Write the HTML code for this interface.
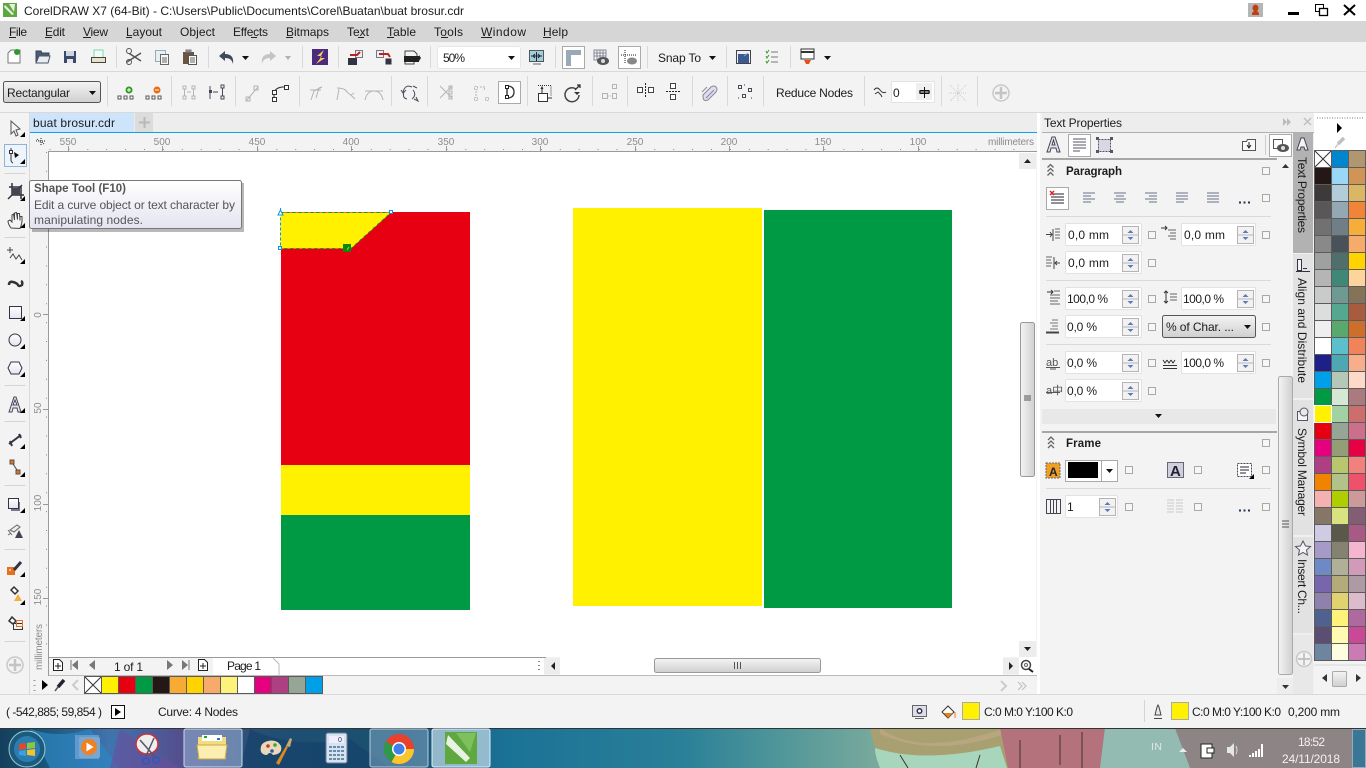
<!DOCTYPE html>
<html><head><meta charset="utf-8"><title>CorelDRAW X7</title>
<style>
html,body{margin:0;padding:0;background:#f3f3f3;width:1366px;height:768px;overflow:hidden}
svg{display:block;position:absolute;left:0;top:0}
text{font-family:"Liberation Sans",sans-serif;font-size:12px;fill:#1c1c1c}
.b{font-weight:bold;font-size:11.500px}
.r{font-size:10px;fill:#8c8c8c}
.d{stroke:#4a4a5a;fill:none;stroke-width:1}
.g{stroke:#b4b4b4;fill:none;stroke-width:1}
.k{stroke:#2b2b3a;fill:none;stroke-width:1}
.w{fill:#f4f4f4}
</style></head><body>
<svg width="1366" height="768" viewBox="0 0 1366 768" xmlns="http://www.w3.org/2000/svg">
<defs>
<linearGradient id="gb" x1="0" y1="0" x2="0" y2="1"><stop offset="0" stop-color="#f4f4f4"/><stop offset="1" stop-color="#cfcfcf"/></linearGradient>
<linearGradient id="gt" x1="0" y1="0" x2="0" y2="1"><stop offset="0" stop-color="#fff"/><stop offset="1" stop-color="#e3e4ef"/></linearGradient>
<linearGradient id="gv" x1="0" y1="0" x2="1" y2="0"><stop offset="0" stop-color="#f4f4f4"/><stop offset="1" stop-color="#cfcfcf"/></linearGradient>
<linearGradient id="tb" x1="0" y1="0" x2="1" y2="0"><stop offset="0" stop-color="#153f5c"/><stop offset=".03" stop-color="#185478"/><stop offset=".08" stop-color="#3f74ad"/><stop offset=".13" stop-color="#54508f"/><stop offset=".2" stop-color="#1f4f72"/><stop offset=".3" stop-color="#1a5070"/><stop offset=".37" stop-color="#1a7296"/><stop offset=".5" stop-color="#2a8098"/><stop offset=".56" stop-color="#4a9399"/><stop offset=".64" stop-color="#78a99c"/></linearGradient>
<g id="cb"><rect x=".5" y=".5" width="7" height="7" fill="#f6f6f6" stroke="#a8a8a8"/></g>
<g id="sp"><rect x=".5" y=".5" width="16" height="17" fill="#f2f2f2" stroke="#b4b4b4"/><path d="M1 9h15" stroke="#b4b4b4"/><path d="M8.500 4l3 3h-6z M8.500 14l3-3h-6z" fill="#5f78b8"/></g>
<g id="fd"><rect x=".5" y=".5" width="76" height="22" rx="1" fill="#fff" stroke="#e2e2e2"/><use href="#sp" x="57" y="3"/></g>
<g id="fd2"><rect x=".5" y=".5" width="74" height="22" rx="1" fill="#fff" stroke="#e2e2e2"/><use href="#sp" x="56" y="3"/></g>
<path id="cn" d="M0 0h5v-5z" fill="#000"/>
<path id="dd" d="M0 0h7l-3.500 4z" fill="#111"/>
<g id="nodes3"><rect x="0" y="0" width="3" height="3" fill="#fff" stroke="#555"/><rect x="6" y="0" width="3" height="3" fill="#fff" stroke="#555"/><rect x="12" y="0" width="3" height="3" fill="#fff" stroke="#555"/></g>
</defs>

<!-- base -->
<rect width="1366" height="768" fill="#f3f3f3"/>
<rect width="1366" height="21" fill="#fff"/>
<rect y="21" width="1366" height="21" fill="#d6d6d6"/>
<rect y="71" width="1366" height="1" fill="#d9d9d9"/>
<rect y="112" width="1366" height="1" fill="#d9d9d9"/>

<!-- title -->
<rect x="3" y="3" width="14" height="14" fill="#5fa83f"/>
<path d="M5 5l9 9-2 1-8-8z M9 4l5 8 1-8z" fill="#fff" opacity=".85"/>
<text x="24" y="15" textLength="440">CorelDRAW X7 (64-Bit) - C:\Users\Public\Documents\Corel\Buatan\buat brosur.cdr</text>
<rect x="1248" y="3" width="15" height="14" fill="#b5b5b5"/>
<path d="M1252 15v-2l2-2a3 3.500 0 1 1 3 0l2 2v2z" fill="#c23f12"/>
<rect x="1288" y="12" width="11" height="3" fill="#000"/>
<rect x="1315.500" y="4.500" width="8" height="7" fill="#fff" stroke="#000"/><rect x="1319.500" y="8.500" width="8" height="7" fill="#fff" stroke="#000" stroke-width="1.300"/>
<path d="M1344 5l11 10M1355 5l-11 10" stroke="#000" stroke-width="2"/>

<!-- menu -->
<g>
<text x="9" y="36" textLength="18">File</text><rect x="9" y="37" width="7" height="1" fill="#222"/>
<text x="45" y="36" textLength="20">Edit</text><rect x="45" y="37" width="7" height="1" fill="#222"/>
<text x="83" y="36" textLength="25">View</text><rect x="83" y="37" width="8" height="1" fill="#222"/>
<text x="126" y="36" textLength="36">Layout</text><rect x="126" y="37" width="6" height="1" fill="#222"/>
<text x="180" y="36" textLength="35">Object</text>
<text x="233" y="36" textLength="35">Effects</text><rect x="251" y="37" width="6" height="1" fill="#222"/>
<text x="286" y="36" textLength="43">Bitmaps</text><rect x="286" y="37" width="7" height="1" fill="#222"/>
<text x="347" y="36" textLength="22">Text</text><rect x="358" y="37" width="6" height="1" fill="#222"/>
<text x="387" y="36" textLength="29">Table</text><rect x="387" y="37" width="7" height="1" fill="#222"/>
<text x="434" y="36" textLength="29">Tools</text><rect x="441" y="37" width="7" height="1" fill="#222"/>
<text x="481" y="36" textLength="45">Window</text><rect x="481" y="37" width="11" height="1" fill="#222"/>
<text x="543" y="36" textLength="25">Help</text><rect x="543" y="37" width="8" height="1" fill="#222"/>
</g>

<!-- toolbar 1 separators -->
<path d="M116.500 46v22M208.500 46v22M302.500 46v22M338.500 46v22M430.500 46v22M555.500 46v22M647.500 46v22M726.500 46v22M790.500 46v22" stroke="#d9d9d9"/>
<!-- toolbar 1 icons -->
<path d="M8 53l3-3h9v13H8z" fill="#fff" stroke="#777"/><circle cx="17" cy="52" r="3" fill="#2e9a2e"/>
<path d="M36 62V51h5l1 2h7v3" fill="#4e5a70" stroke="#3a4558"/><path d="M36 63l3-7h11l-2 7z" fill="#e9edf2" stroke="#4a566a"/>
<rect x="64" y="51" width="12" height="12" fill="#3a4a6a"/><rect x="66" y="51" width="8" height="5" fill="#cfd4de"/><rect x="67" y="59" width="6" height="4" fill="#e8e8e8"/>
<path d="M94 57v-7h9v7" fill="#f2fbf8" stroke="#7da"/><rect x="91.500" y="57.500" width="14" height="5" fill="#e9e2c5" stroke="#444"/>
<path d="M127 52l14 9M127 62l14-9" stroke="#555" stroke-width="1.500"/><circle cx="129" cy="51" r="2.500" class="w" stroke="#555" fill="none"/><circle cx="129" cy="62" r="2.500" fill="none" stroke="#555"/>
<rect x="155.500" y="50.500" width="10" height="11" fill="#e6f0f0" stroke="#9ab"/><rect x="160.500" y="54.500" width="8" height="10" fill="#f8f8f8" stroke="#666"/><path d="M162 58h5M162 60h5M162 62h5" stroke="#666"/>
<rect x="183" y="52" width="11" height="12" fill="#6b5540"/><path d="M186 52v-2h5v2z" fill="#99a" stroke="#778"/><rect x="188.500" y="55.500" width="8" height="9" fill="#fafafa" stroke="#555"/><path d="M190 58h5M190 60h5M190 62h5" stroke="#666"/>
<path d="M219 56l6-5v3c6 0 9 3 8 10-1-4-3-6-8-6v3z" fill="#3f4a5e"/>
<use href="#dd" x="242" y="56"/>
<path d="M276 56l-6-5v3c-6 0-9 3-8 10 1-4 3-6 8-6v3z" fill="#c4c4c4"/>
<path d="M285 56h6l-3 4z" fill="#b0b0b0"/>
<rect x="312" y="49" width="16" height="16" fill="#4c2a7e"/><path d="M324 50l-7 6h5l-6 8 9-6h-5l4-8z" fill="#f2d25e"/>
<rect x="348.500" y="58.500" width="8" height="6" fill="#334" stroke="#334"/><rect x="355.500" y="50.500" width="7" height="7" fill="#eee" stroke="#778"/><path d="M350 55h7l3-3" stroke="#b22" stroke-width="2" fill="none"/>
<rect x="376.500" y="50.500" width="7" height="7" fill="#eee" stroke="#778"/><rect x="385.500" y="58.500" width="6" height="6" fill="#334"/><path d="M379 54h9l2 3" stroke="#b22" stroke-width="2" fill="none"/>
<path d="M405 51h9l3 3v4h-12z" fill="#f4f4f4" stroke="#444"/><rect x="404" y="56" width="15" height="6" fill="#222"/><path d="M405 62v2h9v-2" stroke="#444" fill="none"/><path d="M419 55l2 3-2 3z" fill="#222"/>
<rect x="437.500" y="46.500" width="83" height="22" rx="2" fill="#fff" stroke="#e6e6e6"/>
<text x="443" y="62" textLength="22">50%</text><use href="#dd" x="508" y="56"/>
<rect x="529.500" y="50.500" width="14" height="11" fill="#9ecfdc" stroke="#555"/><path d="M531 56h11M536.500 52v9M533 56l2-2M533 56l2 2M540 56l-2-2M540 56l-2 2" stroke="#223"/><path d="M533 64h8" stroke="#666"/>
<rect x="562.500" y="46.500" width="22" height="22" fill="#fff" stroke="#aaa"/><path d="M566 50h15v5h-10v11h-5z" fill="#9aa9b8"/>
<path d="M594 50h12v10h-12zM597 50v10M600 50v10M603 50v10M594 53h12M594 56h12" stroke="#889" fill="none"/><ellipse cx="603" cy="61" rx="6" ry="4" fill="#555"/><circle cx="603" cy="61" r="2" fill="#ddd"/>
<rect x="618.500" y="46.500" width="22" height="22" fill="#fff" stroke="#aaa"/><path d="M625 50v13M621 55h15" stroke="#222" stroke-dasharray="1 1"/><ellipse cx="632" cy="61" rx="5" ry="3.500" fill="#888"/>
<text x="658" y="62" textLength="43">Snap To</text><use href="#dd" x="709" y="56"/>
<rect x="736.500" y="50.500" width="14" height="13" fill="#eef" stroke="#444"/><rect x="738" y="54" width="11" height="9" fill="#3a5a90"/><path d="M744 56l4-3" stroke="#8a9"/>
<path d="M766 51l1 2 2-3M766 56l1 2 2-3M766 61l1 2 2-3" stroke="#3a9a2a" fill="none"/><path d="M771 52h7M771 57h7M771 62h7" stroke="#777"/>
<rect x="801" y="49" width="13" height="10" fill="#fff" stroke="#333"/><rect x="801" y="51" width="13" height="2" fill="#333"/><path d="M804 60h7l-2 4h-3z" fill="#e8501a"/>
<use href="#dd" x="824" y="56"/>

<!-- toolbar 2 -->
<path d="M107.500 76v30M171.500 76v30M235.500 76v30M299.500 76v30M391.500 76v30M427.500 76v30M527.500 76v30M592.500 76v30M627.500 76v30M692.500 76v30M727.500 76v30M763.500 76v30M864.500 76v30M941.500 76v30M977.500 76v30" stroke="#d9d9d9"/>
<rect x="3.500" y="81.500" width="97" height="21" rx="2" fill="url(#gb)" stroke="#555"/>
<text x="7" y="97" textLength="63">Rectangular</text><use href="#dd" x="89" y="91"/>
<use href="#nodes3" x="118" y="96"/><circle cx="129" cy="90" r="3.500" fill="#2e9a1e"/><path d="M127 90h4M129 88v4" stroke="#fff"/>
<use href="#nodes3" x="146" y="96"/><circle cx="157" cy="90" r="3.500" fill="#ee6a10"/><path d="M155 90h4" stroke="#fff"/>
<g class="g"><path d="M183 86h3v3h-3zM183 96h3v3h-3zM192 86h3v3h-3zM192 96h3v3h-3zM184.500 89v7M193.500 89v7M187 92h4"/></g>
<g class="d"><path d="M210 86v13M221 85h3v3h-3zM221 96h3v3h-3zM222.500 88v8M213 92h5"/></g><rect x="209" y="90" width="3" height="3" fill="#445"/>
<path d="M246 101l12-14M246 97h4v4h-4zM254 86h4v4h-4z" class="g"/>
<path d="M274 97v-4q1-5 8-6h6" class="k"/><path d="M272.500 97.500h4v4h-4zM284.500 85.500h4v4h-4zM272.500 90.500h4v4h-4z" fill="#fff" stroke="#333"/>
<path d="M311 100l3-9 8-4M316 98l3-10 3-1M310 90h11" class="g"/>
<path d="M337 88q8 0 10 4 4 3 8 7M337 100l2-11M351 95l3-2" class="g"/>
<path d="M365 100q2-9 9-9t9 9M365 91h18" class="g"/>
<path d="M404 92q-2 6 3 7M412 87q-7-3-9 5M413 90q4 5-1 9M413 86l4 2" class="d"/>
<path d="M401 90l2 3 3-3M414 99l4 2-2-4" class="d"/>
<path d="M440 86l6 6-6 6M452 86l-6 6 6 6" class="g"/><path d="M449 86h3v3h-3zM449 91h3v3h-3zM449 96h3v3h-3z" class="g"/>
<path d="M474.500 86.500h3v3h-3zM474.500 97.500h3v3h-3zM485.500 97.500h3v3h-3zM476 91v5M480 87h5l-1 3" class="g" stroke-dasharray="2 1"/>
<rect x="498.500" y="81.500" width="22" height="22" fill="#fff" stroke="#aaa"/>
<path d="M507 86q7 0 7 6t-7 6z" fill="none" stroke="#333" stroke-width="1.300"/><path d="M505.500 85.500h3v3h-3zM505.500 95.500h3v3h-3z" fill="#fff" stroke="#222"/><path d="M507 88v8" stroke="#222"/>
<path d="M538 85.500h13v11" fill="none" stroke="#333" stroke-dasharray="1 1"/><rect x="538.500" y="93.500" width="9" height="8" fill="#fff" stroke="#333"/><path d="M541 89l1-2 1 2M542 87v6M548 98h4" stroke="#333"/>
<path d="M576 89a7 7 0 1 0 3 6" fill="none" stroke="#444" stroke-width="1.500"/><path d="M574 92l3 3 3-3" fill="#333"/><path d="M575 90l5-5M577 85h3v3" stroke="#333" fill="none" stroke-width="1.300"/>
<path d="M602.500 93.500h5v5h-5zM612.500 84.500h4v4h-4zM612.500 93.500h4v5h-4z" class="g"/><path d="M608 96h4" class="g" stroke-dasharray="1 1"/>
<rect x="637.500" y="87.500" width="5" height="5" fill="#fff" stroke="#444"/><rect x="648.500" y="87.500" width="5" height="5" fill="#fff" stroke="#444"/><path d="M645.500 83v15" stroke="#222" stroke-dasharray="2 1"/>
<rect x="670.500" y="83.500" width="5" height="5" fill="#fff" stroke="#444"/><rect x="670.500" y="94.500" width="5" height="5" fill="#fff" stroke="#444"/><path d="M666 91.500h15" stroke="#222" stroke-dasharray="2 1"/>
<path d="M703 95l8-8q3-2 5 0t0 5l-8 8q-3 1-4 0t-1-5zM706 98l8-8M707 87l-5 5" fill="#dde" stroke="#889"/>
<path d="M738.500 85.500h3v3h-3zM748.500 88.500h3v3h-3zM742.500 94.500h3v3h-3z" class="d"/><path d="M738 98h1M751 98h1M744 85h1" stroke="#333"/>
<text x="776" y="97" textLength="77">Reduce Nodes</text>
<path d="M874 90q3-4 6 0t6 2M875 94l3-2 3 3 1 2" fill="none" stroke="#333"/>
<rect x="891.500" y="81.500" width="43" height="21" rx="1" fill="#fff" stroke="#e2e2e2"/>
<text x="893" y="97">0</text>
<rect x="916" y="83" width="16" height="17" fill="#efefef"/><path d="M919 92h11M924.500 87v11" stroke="#111"/><rect x="920" y="90.500" width="9" height="3" fill="none" stroke="#111"/>
<path d="M950 85l16 16M966 85l-16 16M958 84v18M949 93h18" stroke="#ccc" stroke-dasharray="1 1"/>
<circle cx="1001" cy="93" r="8" fill="#f3f3f3" stroke="#c8c8c8" stroke-width="1.500"/><path d="M995 93h12M1001 87v12" stroke="#c4c4c4" stroke-width="2.500"/>

<!-- Left toolbox -->
<rect x="29" y="113" width="1" height="582" fill="#d9d9d9"/>
<path d="M4.500 173.500h21M4.500 237.500h21M4.500 385.500h21M4.500 421.500h21M4.500 485.500h21M4.500 549.500h21M4.500 641.500h21" stroke="#d4d4d4"/>
<path d="M11 121l9 8-4 1 2 5-2 1-2-5-3 3z" fill="#f4f4f4" stroke="#555"/><use href="#cn" x="20" y="137"/>
<rect x="4.500" y="144.500" width="22" height="22" fill="#eef4fb" stroke="#8fb2d6"/>
<path d="M11 148v12q0 2 2 3" fill="none" stroke="#333"/><rect x="9.500" y="150.500" width="3" height="3" fill="#fff" stroke="#333"/><path d="M14 152l5 3-4 3z" fill="#111"/><use href="#cn" x="20" y="164"/>
<path d="M12 183v12h12M9 187h12v12M8 199l14-14" stroke="#333" fill="none" stroke-width="1.500"/><rect x="12" y="188" width="8" height="7" fill="#445"/><use href="#cn" x="20" y="201"/>
<path d="M11 228q-3-4-3-7l2-1 2 2v-7l1.500-1 1 6v-7l2-.5 1 7v-6l2 0 .5 7 v-4h2q.5 7-2 12z" fill="#f4f4f4" stroke="#444"/><use href="#cn" x="20" y="228"/>
<path d="M7 250l6 0M10 247v6M10 258l3-4 3 5 3-4 3 5" stroke="#444" fill="none"/><use href="#cn" x="20" y="264"/>
<path d="M9 285q0-4 4-3t5 3 4 0q1-3-1-4" stroke="#333" stroke-width="2.500" fill="none"/>
<rect x="9.500" y="306.500" width="12" height="12" fill="url(#gt)" stroke="#334"/><use href="#cn" x="20" y="321"/>
<ellipse cx="15" cy="340" rx="6" ry="6" fill="url(#gt)" stroke="#334"/><use href="#cn" x="20" y="349"/>
<path d="M11 362h8l3 6-3 6h-8l-3-6z" fill="url(#gt)" stroke="#334"/><use href="#cn" x="20" y="377"/>
<path d="M9 412l5-15h2l5 15h-3l-1-4h-4l-1 4zM13 405h4l-2-5z" fill="#e6e6f0" stroke="#445"/><use href="#cn" x="20" y="413"/>
<path d="M9 444l12-9M10 441l2 5M19 434l2 4" stroke="#334" stroke-width="2" fill="none"/><use href="#cn" x="20" y="449"/>
<rect x="10" y="460" width="4" height="4" fill="#e8701a" stroke="#555"/><rect x="16" y="470" width="4" height="4" fill="#e8701a" stroke="#555"/><path d="M13 464l4 6" stroke="#444"/><use href="#cn" x="20" y="477"/>
<rect x="11" y="502" width="9" height="9" fill="#778" /><rect x="8.500" y="498.500" width="10" height="10" fill="url(#gt)" stroke="#334"/><use href="#cn" x="20" y="513"/>
<path d="M10 530l7-5 3 2-6 5zM8 530l4 5M11 533l-3 2" stroke="#666" fill="#eee"/><path d="M19 530l4 8h-8z" fill="#445"/>
<rect x="7" y="567" width="8" height="8" fill="#e8701a"/><rect x="9" y="569" width="2" height="2" fill="#fbb"/><path d="M14 570l7-8" stroke="#334" stroke-width="3"/><use href="#cn" x="20" y="577"/>
<path d="M11 590l3-3 4 4-3 3z" fill="#fff" stroke="#333" stroke-width="1.500"/><path d="M18 594l4 7h-8z" fill="#f0b040"/><use href="#cn" x="20" y="605"/>
<path d="M9 621l3-4 4 4-3 3z" fill="#fff" stroke="#333" stroke-width="1.500"/><rect x="13.500" y="623.500" width="9" height="6" fill="none" stroke="#334"/><rect x="16.500" y="620.500" width="6" height="6" fill="none" stroke="#e8701a"/>
<circle cx="15" cy="665" r="8" fill="#f3f3f3" stroke="#c8c8c8" stroke-width="1.500"/><path d="M9 665h12M15 659v12" stroke="#c4c4c4" stroke-width="2.500"/>

<!-- document tab bar -->
<rect x="30" y="113" width="1007" height="20" fill="#ededed"/>
<rect x="30" y="113" width="104" height="19" fill="#cde4fb"/>
<rect x="135" y="113" width="18" height="19" fill="#dcdcdc"/><path d="M139 122.500h11M144.500 117v11" stroke="#b8b8b8" stroke-width="2"/>
<rect x="30" y="132" width="1007" height="1" fill="#0aa3ea"/>
<text x="33" y="127" textLength="82">buat brosur.cdr</text>

<!-- rulers -->
<rect x="30" y="133" width="1007" height="18" fill="#f3f3f3"/>
<rect x="30" y="133" width="18" height="524" fill="#f3f3f3"/>
<rect x="49" y="152" width="970" height="505" fill="#fff"/>
<rect x="48" y="151" width="989" height="1" fill="#9a9a9a"/>
<rect x="48" y="151" width="1" height="525" fill="#9a9a9a"/>
<path d="M36 141h9M41 138v8M37 139l3 3M44 144l-2-2" stroke="#222" stroke-dasharray="1 1"/>
<g text-anchor="middle">
<text class="r" x="68" y="145">550</text><text class="r" x="162" y="145">500</text><text class="r" x="257" y="145">450</text><text class="r" x="351" y="145">400</text><text class="r" x="446" y="145">350</text><text class="r" x="540" y="145">300</text><text class="r" x="635" y="145">250</text><text class="r" x="729" y="145">200</text><text class="r" x="823" y="145">150</text><text class="r" x="918" y="145">100</text>
</g>
<text class="r" x="988" y="145" textLength="46">millimeters</text>
<path d="M68.500 146v5M162.500 146v5M257.500 146v5M351.500 146v5M446.500 146v5M540.500 146v5M635.500 146v5M729.500 146v5M823.500 146v5M918.500 146v5" stroke="#999"/>
<path d="M49 149.500h970" stroke="#888" stroke-dasharray="1 17.900" stroke-dashoffset="-0.500"/>
<path d="M46.500 152v505" stroke="#888" stroke-dasharray="1 17.900"/>
<path d="M43 314.500h5M43 409.500h5M43 504.500h5M43 598.500h5" stroke="#999"/>
<text class="r" transform="translate(41,318) rotate(-90)" text-anchor="middle" x="3" y="0">0</text>
<text class="r" transform="translate(41,408) rotate(-90)" text-anchor="middle">50</text>
<text class="r" transform="translate(41,503) rotate(-90)" text-anchor="middle">100</text>
<text class="r" transform="translate(41,597) rotate(-90)" text-anchor="middle">150</text>
<text class="r" transform="translate(42,670) rotate(-90)" textLength="46">millimeters</text>

<!-- objects -->
<rect x="281" y="212" width="189" height="253" fill="#e60012"/>
<rect x="281" y="465" width="189" height="50" fill="#fff100"/>
<rect x="281" y="515" width="189" height="95" fill="#009944"/>
<rect x="573" y="208" width="189" height="398" fill="#fff100"/>
<rect x="764" y="210" width="188" height="398" fill="#009944"/>
<path d="M280.500 212.500H391L351 248.500H280.500z" fill="#fff100"/>
<path d="M280.500 212.500H391L351 248.500H280.500" fill="none" stroke="#009944" stroke-dasharray="3 3"/>
<path d="M280.500 212.500V248.500" fill="none" stroke="#0a94e0" stroke-dasharray="3 2"/>
<rect x="343" y="244" width="8" height="8" fill="#0a8a0a"/>
<path d="M347 250l2-3" stroke="#9c6"/>
<rect x="389.500" y="210.500" width="3" height="3" fill="#fff" stroke="#0a94e0"/>
<rect x="278.500" y="246.500" width="3" height="3" fill="#fff" stroke="#0a94e0"/>
<path d="M278 215l2.500-5 2.500 5h-5z M280.500 208v3" fill="#fff" stroke="#0a94e0"/>

<!-- tooltip -->
<rect x="32" y="183" width="212" height="49" fill="#000" opacity=".28"/>
<rect x="29.500" y="180.500" width="212" height="48" rx="2" fill="url(#gt)" stroke="#777"/>
<text x="34" y="192" class="b" style="fill:#555" textLength="92">Shape Tool (F10)</text>
<text x="34" y="209" style="fill:#555" textLength="201">Edit a curve object or text character by</text>
<text x="34" y="224" style="fill:#555" textLength="109">manipulating nodes.</text>

<!-- canvas scrollbars -->
<rect x="1019" y="152" width="17" height="505" fill="#fff"/>
<rect x="1019" y="153" width="17" height="16" fill="#ededed"/><path d="M1024 163h7l-3.500-4z" fill="#222"/>
<rect x="1020.500" y="322.500" width="14" height="154" rx="2" fill="url(#gv)" stroke="#999"/><path d="M1024 396h7M1024 398h7M1024 400h7" stroke="#555"/>
<rect x="1019" y="641" width="17" height="16" fill="#ededed"/><path d="M1024 647h7l-3.500 4z" fill="#222"/>
<rect x="49" y="658" width="164" height="17" fill="#f3f3f3"/>
<rect x="213" y="658" width="331" height="17" fill="#fff"/>
<rect x="560" y="657" width="443" height="18" fill="#fff"/>
<rect x="1019" y="657" width="18" height="18" fill="#fff"/>
<rect x="49" y="657" width="497" height="1" fill="#9a9a9a"/>
<rect x="49" y="675" width="988" height="1" fill="#bbb"/>
<path d="M53.500 659.500h6l3 3v8h-9z" fill="#fff" stroke="#222"/><path d="M55 666h6M58 663v6" stroke="#222"/>
<path d="M71 660v10" stroke="#777"/><path d="M78 660v10l-6-5z M95 660v10l-6-5z" fill="#777"/>
<text x="114" y="671" textLength="29">1 of 1</text>
<path d="M167 660v10l6-5z M182 660v10l6-5z" fill="#777"/><path d="M189 660v10" stroke="#777"/>
<path d="M198.500 659.500h6l3 3v8h-9z" fill="#fff" stroke="#222"/><path d="M200 666h6M203 663v6" stroke="#222"/>
<path d="M273 658l6 6v11" stroke="#bbb" fill="none"/>
<text x="227" y="670" textLength="34">Page 1</text>
<path d="M539 661v1M539 665v1M539 669v1" stroke="#888" stroke-width="2"/>
<rect x="544" y="658" width="16" height="16" fill="#ededed"/><path d="M555 662v8l-4-4z" fill="#222"/>
<rect x="654.500" y="658.500" width="166" height="14" rx="2" fill="url(#gb)" stroke="#999"/><path d="M734.500 662v7M737.500 662v7M740.500 662v7" stroke="#555"/>
<rect x="1003" y="658" width="16" height="16" fill="#ededed"/><path d="M1009 662v8l4-4z" fill="#222"/>
<circle cx="1026" cy="665" r="4.500" fill="#fff" stroke="#444" stroke-width="1.500"/><circle cx="1026" cy="665" r="1.500" fill="none" stroke="#666"/><path d="M1029 669l4 3" stroke="#222" stroke-width="2"/>

<!-- bottom color bar -->
<path d="M34.500 680v1M34.500 685v1M34.500 690v1" stroke="#999" stroke-width="2"/>
<path d="M42 680v10l6-5z" fill="#000"/>
<path d="M55 691l3-4" stroke="#556" stroke-width="1.500"/><path d="M58 687l6-7" stroke="#223" stroke-width="3.500"/>
<path d="M78 680l-5 5 5 5" fill="none" stroke="#ccc" stroke-width="2"/>
<rect x="84" y="676" width="239" height="18" fill="#5a5a5a"/>
<rect x="85" y="677" width="16" height="16" fill="#fff"/><path d="M85 677l16 16M101 677l-16 16" stroke="#333"/>
<rect x="102" y="677" width="16" height="16" fill="#fff100"/><rect x="119" y="677" width="16" height="16" fill="#e60012"/><rect x="136" y="677" width="16" height="16" fill="#009944"/><rect x="153" y="677" width="16" height="16" fill="#231815"/><rect x="170" y="677" width="16" height="16" fill="#f7ab35"/><rect x="187" y="677" width="16" height="16" fill="#ffd200"/><rect x="204" y="677" width="16" height="16" fill="#f6ab6a"/><rect x="221" y="677" width="16" height="16" fill="#fff27a"/><rect x="238" y="677" width="16" height="16" fill="#fff"/><rect x="255" y="677" width="16" height="16" fill="#e4007f"/><rect x="272" y="677" width="16" height="16" fill="#ae3f83"/><rect x="289" y="677" width="16" height="16" fill="#95a596"/><rect x="306" y="677" width="16" height="16" fill="#00a0e9"/>
<path d="M1001 681l5 5-5 5" fill="none" stroke="#ccc" stroke-width="2"/>
<path d="M1018 682l4 4-4 4M1022 682l4 4-4 4" fill="none" stroke="#bbb"/>

<!-- gap white strip -->
<rect x="1037" y="113" width="3" height="581" fill="#fff"/>

<!-- status -->
<rect y="694" width="1366" height="1" fill="#d9d9d9"/>
<text x="6" y="716" textLength="96">( -542,885; 59,854 )</text>
<rect x="111.500" y="705.500" width="13" height="13" fill="#fff" stroke="#111"/><path d="M115 708v8l6-4z" fill="#000"/>
<text x="158" y="716" textLength="80">Curve: 4 Nodes</text>
<rect x="912.500" y="705.500" width="14" height="11" fill="#dde" stroke="#666"/><circle cx="919.500" cy="711" r="3" fill="#334"/><circle cx="919.500" cy="711" r="1.500" fill="#fff"/><path d="M915 718.500h9" stroke="#666"/>
<path d="M942 712l6-6 6 6-6 6z" fill="#fff" stroke="#333"/><path d="M944 713h9l-5 5z" fill="#e8801a"/><path d="M955 712v6" stroke="#e8801a"/>
<rect x="962.500" y="702.500" width="17" height="17" fill="#fff100" stroke="#aaa"/>
<text x="984" y="716" textLength="89">C:0 M:0 Y:100 K:0</text>
<rect x="1144" y="700" width="1" height="22" fill="#d4d4d4"/>
<path d="M1155 715l2-8 1-2 1 2 2 8zM1154 718.500h8" fill="#e8e8e8" stroke="#444"/>
<rect x="1171.500" y="702.500" width="17" height="17" fill="#fff100" stroke="#aaa"/>
<text x="1192" y="716" textLength="89">C:0 M:0 Y:100 K:0</text>
<text x="1288" y="716" textLength="52">0,200 mm</text>

<!-- Right panel -->
<rect x="1042" y="113" width="272" height="20" fill="#ededed"/>
<text x="1044" y="127" textLength="78">Text Properties</text>
<path d="M1283 118v8l4-4zM1287 118v8l4-4z" fill="#bbb"/>
<path d="M1304 118l7 7M1311 118l-7 7" stroke="#c0c0c0" stroke-width="1.500"/>
<rect x="1042" y="132" width="272" height="1" fill="#b0b0b0"/>
<path d="M1047 152l5-15h3l5 15h-3l-1-4h-5l-1 4zM1052 145h3l-1.500-5z" fill="#e6e6f0" stroke="#445"/>
<rect x="1068.500" y="134.500" width="22" height="22" fill="#fff" stroke="#aaa"/>
<path d="M1073 139h13M1073 142h13M1073 145h13M1073 148h13M1073 151h7" stroke="#556"/>
<rect x="1098.500" y="139.500" width="12" height="12" fill="#d8d8e4" stroke="#556" stroke-dasharray="2 1"/><path d="M1096 137h3v3h-3zM1110 137h3v3h-3zM1096 150h3v3h-3zM1110 150h3v3h-3z" fill="#556"/>
<path d="M1242.500 141.500h4l1-2h8v11h-13z" fill="#fafafa" stroke="#555"/><path d="M1249 142v5M1247 145l2 3 2-3" stroke="#222" fill="none"/>
<path d="M1265.500 135v20" stroke="#ccc"/>
<rect x="1269.500" y="134.500" width="22" height="22" fill="#fff" stroke="#aaa"/><rect x="1273.500" y="139.500" width="9" height="9" fill="none" stroke="#555"/><ellipse cx="1283" cy="148" rx="6" ry="4" fill="#555"/><circle cx="1283" cy="148" r="2" fill="#ddd"/>
<rect x="1042" y="158" width="235" height="2" fill="#a6a6a6"/>

<path d="M1048 168l3-3 3 3M1048 172l3-3 3 3M1048 176l3-3 3 3" fill="none" stroke="#666" stroke-width="1.300" transform="translate(-.5,-.5)"/>
<text x="1066" y="175" class="b" textLength="56">Paragraph</text>
<use href="#cb" x="1262" y="167"/>
<rect x="1046.500" y="187.500" width="22" height="22" fill="#fff" stroke="#aaa"/>
<path d="M1051 194h13M1051 197h13M1051 200h13M1051 203h13" stroke="#223"/><path d="M1050 191l4 4M1054 191l-4 4" stroke="#e02020" stroke-width="1.400"/>
<g stroke="#6a7088"><path d="M1083 193h12M1083 196h8M1083 199h12M1083 202h8"/><path d="M1114 193h12M1116 196h8M1114 199h12M1116 202h8"/><path d="M1145 193h12M1149 196h8M1145 199h12M1149 202h8"/><path d="M1176 193h12M1176 196h12M1176 199h12M1176 202h8"/><path d="M1207 193h12M1207 196h12M1207 199h12M1207 202h12"/></g>
<path d="M1239 202.500h2M1243.500 202.500h2M1248 202.500h2" stroke="#223355" stroke-width="2"/>
<use href="#cb" x="1262" y="194"/>
<rect x="1046" y="216" width="225" height="1" fill="#d9d9d9"/>
<path d="M1046 234.500h6M1050 232l2 2.500-2 2.500M1053 229v12" stroke="#444" fill="none"/><path d="M1055 229h5M1055 232h5M1055 235h5M1055 238h5" stroke="#666"/>
<use href="#fd" x="1065" y="223"/><text x="1068" y="239" textLength="41">0,0 mm</text><use href="#cb" x="1148" y="231"/>
<path d="M1161 228h6M1165 226l2 2-2 2" stroke="#333" fill="none"/><path d="M1168 230h8M1170 233h6M1168 236h8M1170 239h6" stroke="#666"/>
<use href="#fd2" x="1181" y="223"/><text x="1184" y="239" textLength="41">0,0 mm</text><use href="#cb" x="1262" y="231"/>
<path d="M1046 257h6M1046 260h5M1046 263h6M1046 266h5" stroke="#666"/><path d="M1054 257v12M1054 263h6M1057 261l-2 2 2 2" stroke="#444" fill="none"/>
<use href="#fd" x="1065" y="251"/><text x="1068" y="267" textLength="41">0,0 mm</text><use href="#cb" x="1148" y="259"/>
<rect x="1046" y="280" width="225" height="1" fill="#d9d9d9"/>
<path d="M1047 292h6M1051 290l2 2-2 2" stroke="#333" fill="none"/><path d="M1054 291h6M1050 295h10M1050 298h10M1050 301h8M1050 304h10" stroke="#666"/>
<use href="#fd" x="1065" y="287"/><text x="1067" y="303" textLength="41">100,0 %</text><use href="#cb" x="1148" y="295"/>
<path d="M1164 293l2-2 2 2M1164 301l2 2 2-2M1166 291v12" stroke="#333" fill="none"/><path d="M1170 294h7M1170 297h7M1170 300h7" stroke="#666"/>
<use href="#fd2" x="1181" y="287"/><text x="1183" y="303" textLength="41">100,0 %</text><use href="#cb" x="1262" y="295"/>
<path d="M1052 320h6M1050 323h8M1052 326h6M1050 329h8" stroke="#777"/><path d="M1046 332.500h13" stroke="#444" stroke-width="2"/>
<use href="#fd" x="1065" y="315"/><text x="1067" y="331" textLength="30">0,0 %</text><use href="#cb" x="1148" y="323"/>
<rect x="1162.500" y="315.500" width="93" height="22" rx="2" fill="url(#gb)" stroke="#555"/>
<text x="1166" y="331" textLength="68">% of Char. ...</text><use href="#dd" x="1244" y="325"/>
<use href="#cb" x="1262" y="323"/>
<rect x="1046" y="344" width="225" height="1" fill="#d9d9d9"/>
<text x="1046" y="366" style="font-size:11px;fill:#555">ab</text><path d="M1046 367.500h14M1050 369h6" stroke="#555"/>
<use href="#fd" x="1065" y="351"/><text x="1067" y="367" textLength="30">0,0 %</text><use href="#cb" x="1148" y="359"/>
<path d="M1162 360l2 3 2-3M1166 360l2 3 2-3M1170 360l2 3 2-3M1162 365.500h14M1162 368.500h14" stroke="#333" fill="none" transform="translate(1,0)"/>
<use href="#fd2" x="1181" y="351"/><text x="1183" y="367" textLength="41">100,0 %</text><use href="#cb" x="1262" y="359"/>
<text x="1046" y="394" style="font-size:11px;fill:#555" font-family="'Noto Sans CJK SC'">a中</text><path d="M1046 392.500h14" stroke="#555"/>
<use href="#fd" x="1065" y="379"/><text x="1067" y="395" textLength="30">0,0 %</text><use href="#cb" x="1148" y="387"/>
<rect x="1042" y="409" width="234" height="15" fill="#e8e8e8"/><path d="M1155 414h7l-3.500 4z" fill="#111"/>
<rect x="1042" y="431" width="235" height="2" fill="#a6a6a6"/>
<path d="M1048 440l3-3 3 3M1048 444l3-3 3 3M1048 448l3-3 3 3" fill="none" stroke="#666" stroke-width="1.300"/>
<text x="1066" y="447" class="b" textLength="35">Frame</text>
<use href="#cb" x="1262" y="439"/>
<rect x="1046" y="463" width="14" height="15" fill="#f0a020" stroke="#667" stroke-dasharray="2 1"/><text x="1049" y="476" class="b" style="font-size:12px;fill:#223">A</text>
<rect x="1065.500" y="460.500" width="52" height="21" fill="#fff" stroke="#aaa"/><rect x="1068" y="462" width="30" height="16" fill="#000"/><path d="M1101.500 461v20" stroke="#aaa"/><use href="#dd" x="1106" y="469"/>
<use href="#cb" x="1125" y="466"/>
<rect x="1167.500" y="462.500" width="16" height="15" fill="#cfd0dc" stroke="#667"/><text x="1170" y="476" class="b" style="font-size:15px;fill:#223">A</text>
<use href="#cb" x="1194" y="466"/>
<rect x="1237.500" y="463.500" width="14" height="13" fill="#fff" stroke="#445" stroke-dasharray="2 1"/><path d="M1240 467h9M1240 470h9M1240 473h6" stroke="#223"/><path d="M1249 479h5v-5z" fill="#000"/>
<use href="#cb" x="1262" y="466"/>
<rect x="1046" y="488" width="225" height="1" fill="#d9d9d9"/>
<rect x="1046.500" y="499.500" width="14" height="14" fill="#f3f3f3" stroke="#445"/><path d="M1050.500 499v15M1053.500 499v15M1056.500 499v15" stroke="#445"/>
<rect x="1065.500" y="495.500" width="52" height="22" rx="1" fill="#fff" stroke="#e2e2e2"/><use href="#sp" x="1099" y="498"/>
<text x="1067" y="511">1</text>
<use href="#cb" x="1125" y="503"/>
<path d="M1167 500h7M1176 500h7M1167 503h7M1176 503h7M1167 506h7M1176 506h7M1167 509h7M1176 509h7M1167 512h7M1176 512h7" stroke="#c8c8c8"/>
<use href="#cb" x="1194" y="503"/>
<path d="M1239 510.500h2M1243.500 510.500h2M1248 510.500h2" stroke="#223355" stroke-width="2"/>
<use href="#cb" x="1262" y="503"/>

<!-- panel scrollbar -->
<path d="M1282 168h7l-3.500-4z" fill="#333"/>
<rect x="1278.500" y="376.500" width="14" height="298" rx="2" fill="url(#gv)" stroke="#aaa"/><path d="M1282 521h7M1282 524h7M1282 527h7" stroke="#555"/>
<rect x="1277" y="678" width="16" height="16" fill="#ededed"/><path d="M1282 685h7l-3.500 4z" fill="#333"/>

<!-- docker tabs -->
<rect x="1293" y="133" width="21" height="561" fill="#f0f0f0"/>
<rect x="1293" y="133" width="20" height="120" fill="#b2b2b2"/>
<rect x="1293" y="254" width="20" height="144" fill="#e2e2e2"/>
<rect x="1293" y="400" width="20" height="135" fill="#e2e2e2"/>
<rect x="1293" y="537" width="20" height="96" fill="#e2e2e2"/>
<path d="M1297 150l4-12h3l4 12h-3l-1-3h-3l-1 3z" fill="#f2f2f2" stroke="#445"/>
<rect x="1297.500" y="259.500" width="4" height="11" fill="#f5f5f5" stroke="#334"/><path d="M1296 271.500h14M1303 268.500h4" stroke="#334"/>
<rect x="1297.500" y="411.500" width="10" height="9" fill="#f5f5f5" stroke="#556"/><circle cx="1304" cy="412" r="4" fill="#e8e8e8" stroke="#556"/>
<path d="M1303 541l2.500 5 5 .5-4 3.500 1 5-4.500-2.500-4.500 2.500 1-5-4-3.500 5-.5z" fill="#f4f4f4" stroke="#556"/>
<text transform="translate(1298,157) rotate(90)" textLength="76">Text Properties</text>
<text transform="translate(1298,278) rotate(90)" textLength="105">Align and Distribute</text>
<text transform="translate(1298,428) rotate(90)" textLength="88">Symbol Manager</text>
<text transform="translate(1298,559) rotate(90)" textLength="55">Insert Ch...</text>
<rect x="1293" y="635" width="20" height="59" fill="#e8e8e8"/>
<circle cx="1304" cy="659" r="7.500" fill="#f3f3f3" stroke="#c8c8c8" stroke-width="1.500"/><path d="M1298 659h12M1304 653v12" stroke="#c4c4c4" stroke-width="2"/>

<!-- palette -->
<rect x="1314" y="113" width="52" height="38" fill="#fff"/>
<rect x="1314" y="660" width="52" height="34" fill="#f3f3f3"/>
<path d="M1317 118h47" stroke="#bbb" stroke-dasharray="1 1.500" stroke-width="2"/>
<path d="M1337 123v10l5-5z" fill="#000"/>
<path d="M1335 148l3-4" stroke="#ccc" stroke-width="1.500"/><path d="M1338 144l6-6" stroke="#c0c0c0" stroke-width="3.500"/>
<rect x="1314" y="150" width="52" height="511" fill="#5c5c5c"/>
<g id="pal">
<rect x="1315" y="151" width="16" height="16" fill="#fff"/><path d="M1315 151l16 16M1331 151l-16 16" stroke="#333"/>
<rect x="1315" y="168" width="16" height="16" fill="#231815"/><rect x="1315" y="185" width="16" height="16" fill="#3e3a39"/><rect x="1315" y="202" width="16" height="16" fill="#595757"/><rect x="1315" y="219" width="16" height="16" fill="#727171"/><rect x="1315" y="236" width="16" height="16" fill="#898989"/><rect x="1315" y="253" width="16" height="16" fill="#9fa0a0"/><rect x="1315" y="270" width="16" height="16" fill="#b5b5b6"/><rect x="1315" y="287" width="16" height="16" fill="#c9caca"/><rect x="1315" y="304" width="16" height="16" fill="#dcdddd"/><rect x="1315" y="321" width="16" height="16" fill="#efefef"/><rect x="1315" y="338" width="16" height="16" fill="#fff"/><rect x="1315" y="355" width="16" height="16" fill="#1d2088"/><rect x="1315" y="372" width="16" height="16" fill="#00a0e9"/><rect x="1315" y="389" width="16" height="16" fill="#009944"/><rect x="1314.500" y="405.500" width="17" height="17" fill="#fff100" stroke="#fff"/><rect x="1315" y="423" width="16" height="16" fill="#e60012"/><rect x="1315" y="440" width="16" height="16" fill="#e4007f"/><rect x="1315" y="457" width="16" height="16" fill="#ae3f83"/><rect x="1315" y="474" width="16" height="16" fill="#f08300"/><rect x="1315" y="491" width="16" height="16" fill="#f5b0b0"/><rect x="1315" y="508" width="16" height="16" fill="#867668"/><rect x="1315" y="525" width="16" height="16" fill="#cfcbe3"/><rect x="1315" y="542" width="16" height="16" fill="#a69ac9"/><rect x="1315" y="559" width="16" height="16" fill="#6e8ac4"/><rect x="1315" y="576" width="16" height="16" fill="#7766ac"/><rect x="1315" y="593" width="16" height="16" fill="#8e82ad"/><rect x="1315" y="610" width="16" height="16" fill="#4f628f"/><rect x="1315" y="627" width="16" height="16" fill="#5a4f72"/><rect x="1315" y="644" width="16" height="16" fill="#6e85a0"/>

<rect x="1332" y="151" width="16" height="16" fill="#0086d1"/><rect x="1332" y="168" width="16" height="16" fill="#9ad6f5"/><rect x="1332" y="185" width="16" height="16" fill="#b2ccd9"/><rect x="1332" y="202" width="16" height="16" fill="#93a8b2"/><rect x="1332" y="219" width="16" height="16" fill="#6f7e87"/><rect x="1332" y="236" width="16" height="16" fill="#4a5259"/><rect x="1332" y="253" width="16" height="16" fill="#4f6f6a"/><rect x="1332" y="270" width="16" height="16" fill="#3f8878"/><rect x="1332" y="287" width="16" height="16" fill="#6f9a94"/><rect x="1332" y="304" width="16" height="16" fill="#55a890"/><rect x="1332" y="321" width="16" height="16" fill="#59a86e"/><rect x="1332" y="338" width="16" height="16" fill="#5bbfcc"/><rect x="1332" y="355" width="16" height="16" fill="#4ea8b3"/><rect x="1332" y="372" width="16" height="16" fill="#b5c8b8"/><rect x="1332" y="389" width="16" height="16" fill="#d5e8d4"/><rect x="1332" y="406" width="16" height="16" fill="#a2d1a3"/><rect x="1332" y="423" width="16" height="16" fill="#95a596"/><rect x="1332" y="440" width="16" height="16" fill="#949e76"/><rect x="1332" y="457" width="16" height="16" fill="#b8c66e"/><rect x="1332" y="474" width="16" height="16" fill="#b2c28b"/><rect x="1332" y="491" width="16" height="16" fill="#afce00"/><rect x="1332" y="508" width="16" height="16" fill="#d8e27f"/><rect x="1332" y="525" width="16" height="16" fill="#5a5848"/><rect x="1332" y="542" width="16" height="16" fill="#838370"/><rect x="1332" y="559" width="16" height="16" fill="#b0b098"/><rect x="1332" y="576" width="16" height="16" fill="#b3ab7a"/><rect x="1332" y="593" width="16" height="16" fill="#e0d26e"/><rect x="1332" y="610" width="16" height="16" fill="#fff27a"/><rect x="1332" y="627" width="16" height="16" fill="#fff9b1"/><rect x="1332" y="644" width="16" height="16" fill="#fffde0"/>

<rect x="1349" y="151" width="16" height="16" fill="#b09770"/><rect x="1349" y="168" width="16" height="16" fill="#d19457"/><rect x="1349" y="185" width="16" height="16" fill="#dbb765"/><rect x="1349" y="202" width="16" height="16" fill="#f08539"/><rect x="1349" y="219" width="16" height="16" fill="#f7ad3a"/><rect x="1349" y="236" width="16" height="16" fill="#f6ab6a"/><rect x="1349" y="253" width="16" height="16" fill="#ffd200"/><rect x="1349" y="270" width="16" height="16" fill="#fdd49b"/><rect x="1349" y="287" width="16" height="16" fill="#847358"/><rect x="1349" y="304" width="16" height="16" fill="#a85c3f"/><rect x="1349" y="321" width="16" height="16" fill="#cb6f2b"/><rect x="1349" y="338" width="16" height="16" fill="#f08359"/><rect x="1349" y="355" width="16" height="16" fill="#f8ae8a"/><rect x="1349" y="372" width="16" height="16" fill="#fcd9c8"/><rect x="1349" y="389" width="16" height="16" fill="#aa7a7e"/><rect x="1349" y="406" width="16" height="16" fill="#cb6f6e"/><rect x="1349" y="423" width="16" height="16" fill="#cb6f8a"/><rect x="1349" y="440" width="16" height="16" fill="#e60044"/><rect x="1349" y="457" width="16" height="16" fill="#f2807c"/><rect x="1349" y="474" width="16" height="16" fill="#ee526b"/><rect x="1349" y="491" width="16" height="16" fill="#cd9a9c"/><rect x="1349" y="508" width="16" height="16" fill="#835d73"/><rect x="1349" y="525" width="16" height="16" fill="#a85a85"/><rect x="1349" y="542" width="16" height="16" fill="#f4b5cf"/><rect x="1349" y="559" width="16" height="16" fill="#d19ab8"/><rect x="1349" y="576" width="16" height="16" fill="#ad9aa5"/><rect x="1349" y="593" width="16" height="16" fill="#dcbccc"/><rect x="1349" y="610" width="16" height="16" fill="#ae6a9e"/><rect x="1349" y="627" width="16" height="16" fill="#c94898"/><rect x="1349" y="644" width="16" height="16" fill="#cb7ab4"/>
</g>
<path d="M1314 665h52" stroke="#d9d9d9"/>
<path d="M1327 674v8l-5-4z" fill="#333"/><rect x="1332.500" y="671.500" width="14" height="15" rx="1" fill="url(#gb)" stroke="#aaa"/><path d="M1356 674v8l5-4z" fill="#333"/>

<!-- taskbar -->
<rect x="0" y="728" width="1366" height="40" fill="url(#tb)"/>
<path d="M30 729q30 10 60 0l30 39H50z" fill="#2e86c2" opacity=".7"/>
<path d="M120 729l60 39h-70z" fill="#6a4f9e" opacity=".6"/>
<path d="M250 729q40 20 100 10l40 29H240z" fill="#123f68" opacity=".6"/>
<path d="M870 728h140v40H880z" fill="#a9a072"/>
<path d="M880 768q-5-12-5-20 50 16 125-2l7 22z" fill="#a8d6bd"/>
<path d="M880 728q40 30 125 0v6q-70 24-125 0z" fill="#b8a680"/>
<path d="M1000 728h105l-5 40h-92z" fill="#b3727c"/>
<path d="M1105 728h70l15 40h-90z" fill="#94bbb1"/>
<path d="M1175 728h191v40h-176z" fill="#8d8486"/>
<path d="M1020 740v28M1060 735v30M1082 732v36M900 755l8 13M980 755l-4 13" stroke="#3e3232" fill="none"/>
<rect x="0" y="728" width="1366" height="1" fill="#333"/>
<circle cx="27" cy="749" r="18" fill="#1d5a80" stroke="#9cc" stroke-width="1"/><circle cx="27" cy="749" r="13" fill="#2b7db0"/>
<path d="M19 744l7-1v6l-7 1z" fill="#e04a2a"/><path d="M27 743l8-1v6l-8 1z" fill="#8cc63f"/><path d="M19 751l7-1v6l-7-1z" fill="#3aa0e0"/><path d="M27 750l8-1v7l-8-1z" fill="#f4c430"/>
<rect x="75" y="735" width="24" height="24" fill="#6b9fd4" opacity=".85"/><rect x="79" y="737" width="21" height="21" rx="2" fill="#7aa6cf"/><circle cx="89" cy="747" r="8" fill="#f08020"/><path d="M86.500 742.500v9l7-4.500z" fill="#fff"/>
<ellipse cx="147" cy="744" rx="11" ry="10" fill="#eee" stroke="#c33" stroke-width="1.500"/><path d="M140 740l16 18M154 738l-8 18" stroke="#556" stroke-width="1.500"/><circle cx="156" cy="760" r="3" fill="none" stroke="#2a5ac0" stroke-width="1.500"/><circle cx="146" cy="761" r="3" fill="none" stroke="#2a5ac0" stroke-width="1.500"/>
<rect x="184" y="729" width="58" height="38" rx="2" fill="#9ab5d5" fill-opacity=".55" stroke="#cde"/>
<path d="M198 737h28v22h-28z" fill="#f3dc80"/><path d="M197 745h30l-2 14h-26z" fill="#fbeeb0" stroke="#c9a840"/><path d="M202 735h20v6h-20z" fill="#fff"/><rect x="204" y="736" width="3" height="2" fill="#2a2"/><rect x="217" y="738" width="3" height="2" fill="#27c"/>
<path d="M261 752q-2-9 7-11t13 5q2 8-8 9-3-4-6 0-4 0-6-3z" fill="#e9d9b6"/><circle cx="268" cy="746" r="1.800" fill="#c33"/><circle cx="275" cy="745" r="1.800" fill="#3a3"/><circle cx="272" cy="751" r="1.800" fill="#35a"/>
<path d="M276 763l10-17 2 1-9 18z" fill="#e08820"/><path d="M286 746l4-8 2 1-2 8z" fill="#c9a876"/>
<rect x="326" y="733" width="21" height="30" rx="2" fill="#d6e4ef" stroke="#779"/><rect x="329" y="736" width="15" height="7" fill="#eef"/><text x="338" y="742" style="font-size:7px;fill:#335">0</text><path d="M329 747h15M329 751h15M329 755h15M329 759h15" stroke="#6a8ab0" stroke-width="2" stroke-dasharray="3 1"/>
<rect x="370" y="729" width="58" height="38" rx="2" fill="#7da6c4" fill-opacity=".55" stroke="#bcd"/>
<circle cx="399" cy="749" r="15" fill="#e8412e"/><path d="M399 749L386 741.500A15 15 0 0 0 391.500 762z" fill="#2f9a45"/><path d="M399 749l-7.500 13A15 15 0 0 0 414 749z" fill="#fbc52d"/><circle cx="399" cy="749" r="7" fill="#fff"/><circle cx="399" cy="749" r="5.500" fill="#3f80e8"/>
<rect x="432" y="729" width="58" height="38" rx="2" fill="#b2d0de" fill-opacity=".8" stroke="#def"/>
<rect x="445" y="732" width="32" height="32" fill="#5fa83f"/><path d="M448 735l22 23-4 4-20-18z" fill="#fff" opacity=".85"/><path d="M456 733l14 19 6-19z" fill="#7ec05e"/>
<text x="1151" y="750" style="fill:#dfe8e4;font-size:10.500px" textLength="11">IN</text>
<path d="M1179 752l4-4 4 4z" fill="#e8eef0"/>
<rect x="1201" y="744" width="11" height="14" fill="#fff" stroke="#222"/><path d="M1207 748h7v5h-7z" fill="#fff" stroke="#222"/>
<path d="M1227 747h3l4-4v14l-4-4h-3z" fill="#e6e6e6"/><path d="M1236 746q2 4 0 8" stroke="#ddd" fill="none"/>
<path d="M1249 755h2v2h-2zM1252 753h2v4h-2zM1255 751h2v6h-2zM1258 749h2v8h-2zM1261 744h2v13h-2z" fill="#fff"/>
<text x="1298" y="746" style="fill:#f2f2f2;font-size:12px" textLength="27">18:52</text>
<text x="1282" y="763" style="fill:#f2f2f2;font-size:12px" textLength="58">24/11/2018</text>
<rect x="1352.500" y="729.500" width="13" height="38" fill="#3a7796" stroke="#9ab"/>
</svg>
</body></html>
